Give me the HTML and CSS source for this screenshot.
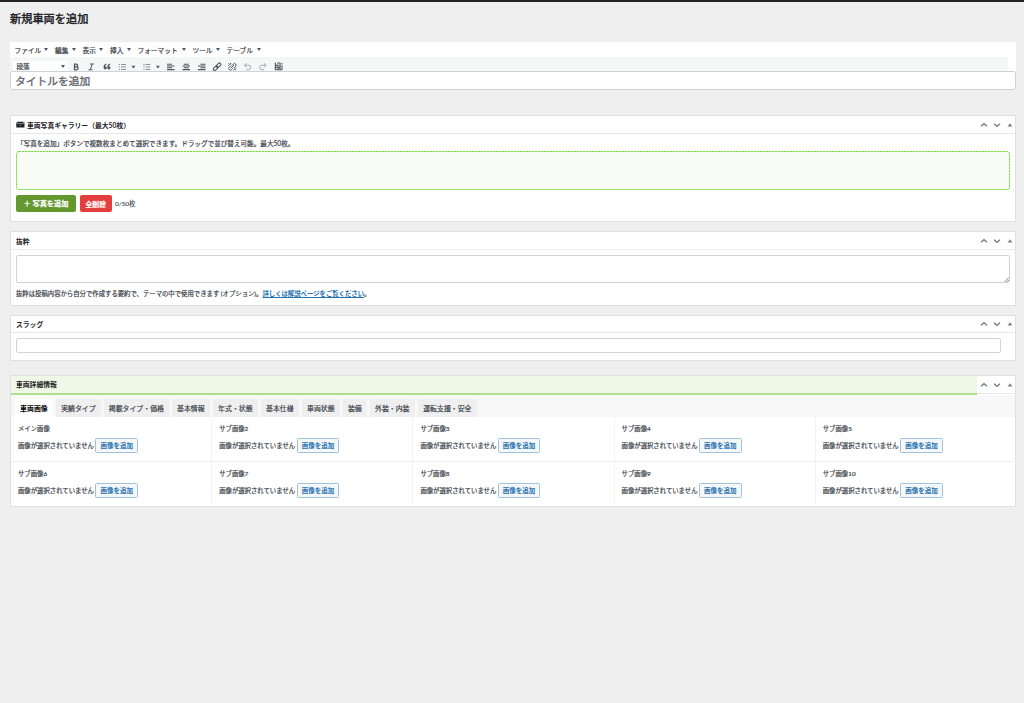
FILE: index.html
```html
<!DOCTYPE html>
<html lang="ja">
<head>
<meta charset="utf-8">
<title>新規車両を追加</title>
<link rel="stylesheet" href="styles.css">
</head>
<body>
<svg class="defs" width="0" height="0">
  <symbol id="up" viewBox="0 0 8 8"><path d="M1 5.3 4 2.7 7 5.3" fill="none" stroke="#787c82" stroke-width="1.3"/></symbol>
  <symbol id="down" viewBox="0 0 8 8"><path d="M1 2.7 4 5.3 7 2.7" fill="none" stroke="#787c82" stroke-width="1.3"/></symbol>
  <symbol id="tri" viewBox="0 0 8 8"><path d="M1.7 5.5 4 2.2 6.3 5.5z" fill="#787c82"/></symbol>
</svg>
<div class="adminbar"></div>
<main class="wrap">
  <h1 class="heading">新規車両を追加</h1>

  <section class="editor">
    <nav class="menubar">
      <span class="menu m1">ファイル</span><span class="menu m2">編集</span><span class="menu m3">表示</span><span class="menu m4">挿入</span><span class="menu m5">フォーマット</span><span class="menu m6">ツール</span><span class="menu m7">テーブル</span>
    </nav>
    <div class="toolbar">
      <div class="format">段落</div>
      <svg class="tools" width="225" height="14" viewBox="70 58 225 14" fill="none" stroke="#50575e" stroke-width="1.1">
        <path d="M74.5 64v6M74 64.1h2.2a1.3 1.3 0 0 1 0 2.7h-1.7M76 66.8h.6a1.5 1.5 0 0 1 0 3H74" stroke-width="1.3"/>
        <path d="M90 64h4M88.5 69.8h4M92.2 64l-1.9 5.8" stroke-width="1"/>
        <path d="M106.3 64.1q-2.3.9-2.1 3.2M110 64.1q-2.3.9-2.1 3.2" stroke-width="1.2"/>
        <g fill="#50575e" stroke="none"><circle cx="105.2" cy="67.8" r="1.6"/><circle cx="108.9" cy="67.8" r="1.6"/></g>
        <g stroke="#8c9196" stroke-width="1"><path d="M121 64.5h5M121 67h5M121 69.5h5M118.8 64.5h1.2M118.8 67h1.2M118.8 69.5h1.2"/><path d="M145.5 64.5h4.8M145.5 67h4.8M145.5 69.5h4.8M144 63.7v2M143.4 67h1M143.4 69.5h1"/></g>
        <path d="M131.4 65.7h4l-2 2.7zM155.9 65.7h4l-2 2.7z" fill="#50575e" stroke="none"/>
        <path d="M167 64.2h5M167 66h7.5M167 67.8h5M167 69.6h7.5"/>
        <path d="M183.8 64.2h5M182.5 66h7.5M183.8 67.8h5M182.5 69.6h7.5"/>
        <path d="M200.5 64.2h5M198 66h7.5M200.5 67.8h5M198 69.6h7.5"/>
        <g><rect x="-2.7" y="-1.4" width="5.4" height="2.8" rx="1.4" transform="translate(218.6 65.2) rotate(-45)"/><rect x="-2.7" y="-1.4" width="5.4" height="2.8" rx="1.4" transform="translate(215.6 68.2) rotate(-45)"/></g>
        <g stroke-width="1"><path d="M232 65.4l1.4-1.4a1.5 1.5 0 0 1 2.2 2.2l-1.7 1.7M232.9 68.2l-1.4 1.4a1.5 1.5 0 0 1-2.2-2.2l1.7-1.7M231 68l3-3M228.6 63.4l1.8 1.8M230.6 62.9v1.4M228.6 65.2v.8M236 70.2l-1.8-1.6M236.4 68h-1M234 70.4v-1"/></g>
        <g stroke="#a7aaad" stroke-width="1"><path d="M246.7 63.2 244.5 65.2l2.2 2M244.7 65.2h3.8a2.2 2.2 0 0 1 0 4.5h-2"/><path d="M263.8 63.2 266 65.2l-2.2 2M265.8 65.2H262a2.2 2.2 0 0 0 0 4.5h2"/></g>
        <path d="M274.8 63.2h1.2M277 63h3.4M274.8 65.4h3M274.8 67.4h2.4M274.8 69.8h7.4M282 63v1.5M280.8 65.6l-2.4 2.6M282 65.5v4M278 64.5v5M275.4 63.2v6.5M280 63v6.5"/>
      </svg>
    </div>
    <div class="title">タイトルを追加</div>
  </section>

  <section class="box gallery">
    <header class="head"><svg class="camera" width="9" height="7" viewBox="0 0 9 7"><path d="M.3 1.4h1V.7h6v.7h1.2v5H.3z" fill="#1d2327"/><path d="M1 2.5h7" stroke="#bbb" stroke-width=".6"/><circle cx="4.4" cy="4.3" r="1" fill="#555"/></svg><h2>車両写真ギャラリー（最大50枚）</h2><div class="handles"><svg><use href="#up"/></svg><svg><use href="#down"/></svg><svg><use href="#tri"/></svg></div></header>
    <p class="note">「写真を追加」ボタンで複数枚まとめて選択できます。ドラッグで並び替え可能。最大50枚。</p>
    <svg class="drop" width="994" height="39"><rect x=".5" y=".5" width="993" height="38" rx="2.5" fill="#f8fbf6" stroke="#c8efb0"/><rect x=".5" y=".5" width="993" height="38" rx="2.5" fill="none" stroke="#7cdb43" stroke-dasharray="2 1"/></svg>
    <div class="actions"><button class="add">＋ 写真を追加</button><button class="del">全削除</button><span class="count">0/50枚</span></div>
  </section>

  <section class="box excerpt">
    <header class="head"><h2>抜粋</h2><div class="handles"><svg><use href="#up"/></svg><svg><use href="#down"/></svg><svg><use href="#tri"/></svg></div></header>
    <div class="area"><svg width="5" height="5" viewBox="0 0 5 5"><path d="M.5 5 5 .5M2.8 5 5 2.8" stroke="#777" stroke-width=".9"/></svg></div>
    <p class="help">抜粋は投稿内容から自分で作成する要約で、テーマの中で使用できます (オプション)。<a>詳しくは解説ページをご覧ください</a>。</p>
  </section>

  <section class="box slug">
    <header class="head"><h2>スラッグ</h2><div class="handles"><svg><use href="#up"/></svg><svg><use href="#down"/></svg><svg><use href="#tri"/></svg></div></header>
    <div class="field"></div>
  </section>

  <section class="box detail">
    <header class="head"><h2>車両詳細情報</h2><div class="handles"><svg><use href="#up"/></svg><svg><use href="#down"/></svg><svg><use href="#tri"/></svg></div></header>
    <nav class="tabs"><span class="tab active w4">車両画像</span><span class="tab w5">実績タイプ</span><span class="tab w8">掲載タイプ・価格</span><span class="tab w4">基本情報</span><span class="tab w5">年式・状態</span><span class="tab w4">基本仕様</span><span class="tab w4">車両状態</span><span class="tab w2">装備</span><span class="tab w5">外装・内装</span><span class="tab w7">運転支援・安全</span></nav>
    <div class="grid">
      <div class="cell"><b>メイン画像</b><p>画像が選択されていません<button>画像を追加</button></p></div>
      <div class="cell"><b>サブ画像2</b><p>画像が選択されていません<button>画像を追加</button></p></div>
      <div class="cell"><b>サブ画像3</b><p>画像が選択されていません<button>画像を追加</button></p></div>
      <div class="cell"><b>サブ画像4</b><p>画像が選択されていません<button>画像を追加</button></p></div>
      <div class="cell"><b>サブ画像5</b><p>画像が選択されていません<button>画像を追加</button></p></div>
      <div class="cell"><b>サブ画像6</b><p>画像が選択されていません<button>画像を追加</button></p></div>
      <div class="cell"><b>サブ画像7</b><p>画像が選択されていません<button>画像を追加</button></p></div>
      <div class="cell"><b>サブ画像8</b><p>画像が選択されていません<button>画像を追加</button></p></div>
      <div class="cell"><b>サブ画像9</b><p>画像が選択されていません<button>画像を追加</button></p></div>
      <div class="cell"><b>サブ画像10</b><p>画像が選択されていません<button>画像を追加</button></p></div>
    </div>
  </section>
</main>
</body>
</html>
```
FILE: styles.css
```css
* { box-sizing: border-box; }
body { margin: 0; height: 703px; overflow: hidden; background: #efefef; color: #3c434a; font: 400 6.37px/10px Lato, "Noto Sans CJK JP", sans-serif; white-space: nowrap; -webkit-text-stroke: .2px currentColor; }
h1, h2, p { margin: 0; }
.defs { position: absolute; }
button { margin: 0; padding: 0; font: inherit; display: flex; align-items: center; justify-content: center; flex: none; }
.adminbar { height: 2px; background: #1d2327; }
.wrap { padding: 0 8px 0 10px; }
.heading { height: 40px; padding-top: 9px; font-size: 11.2px; line-height: 16px; font-weight: 400; color: #1d2327; -webkit-text-stroke-width: .45px; }

.editor { display: flex; flex-direction: column; background: #fff; }
.menubar { display: flex; height: 15px; padding-left: 4.5px; align-items: center; font-size: 6.7px; }
.menu { display: flex; align-items: center; justify-content: space-between; margin-right: 7px; }
.menu::after, .format::after { content: ""; border: 2px solid transparent; border-top: 3px solid #50575e; border-bottom: 0; }
.m1 { width: 33.5px; }
.m2, .m3, .m4 { width: 20.5px; }
.m5 { width: 48px; }
.m6 { width: 27px; }
.m7 { width: 34px; }
.toolbar { display: flex; align-items: flex-start; height: 14px; width: 998px; background: #f5f6f6; }
.format { display: flex; align-items: center; justify-content: space-between; width: 55px; height: 11px; margin: 4px 3px 0 2.5px; padding: 0 3px 0 4px; background: #fff; font-size: 6.5px; }
.tools { margin-top: 1px; margin-left: -.5px; }
.title { height: 19px; padding-left: 4px; border: 1px solid #d0d2d4; border-radius: 2px; background: #fff; color: #646970; font-size: 10.75px; line-height: 18px; -webkit-text-stroke-width: .35px; }

.box { border: 1px solid #e0e0e1; background: #fff; }
.head { display: flex; height: 18px; align-items: center; padding-left: 5px; border-bottom: 1px solid #e8e8e9; }
.head h2 { flex: 1; font-size: 6.8px; font-weight: 700; color: #1d2327; line-height: 10px; -webkit-text-stroke-width: 0; }
.handles { display: flex; width: 38px; padding-left: 3px; gap: 4.8px; }
.handles svg { display: block; width: 8px; height: 8px; }
.camera { margin-right: 2px; }
.gallery { height: 107px; margin-top: 25px; }
.note { padding: 4px 6px 0; height: 17px; line-height: 11px; font-size: 6.6px; }
.drop { display: block; margin: 0 5px; }
.actions { display: flex; margin: 5px 5px 0; height: 17px; align-items: center; font-size: 6.4px; }
.actions button { height: 17px; border: 0; border-radius: 2px; color: #fff; font-weight: 700; }
.add { width: 60px; background: #64982f; margin-right: 4px; font-size: 7.2px; }
.del { width: 31.5px; background: #e53e3e; margin-right: 3.5px; font-size: 6.8px; }
.count { -webkit-text-stroke-width: .1px; }
.excerpt { height: 75px; margin-top: 9px; }
.area { display: flex; justify-content: flex-end; align-items: flex-end; height: 28px; margin: 5px 5px 0; border: 1px solid #d2d3d5; border-radius: 2px; }
.help { padding: 6px 5px; font-size: 6.37px; }
.help a { color: #2271b1; text-decoration: underline; font-weight: 700; -webkit-text-stroke-width: 0; }
.slug { height: 46px; margin-top: 9px; }
.slug .head { height: 17px; }
.field { width: 984.5px; height: 15px; margin: 5px 5px 0; border: 1px solid #d2d3d5; border-radius: 2px; }

.detail { height: 132px; margin-top: 14px; }
.detail .head { height: 19px; padding: 0; border: 0; align-items: flex-start; }
.detail h2 { height: 19px; padding-left: 5px; line-height: 17px; background: #eff7e6; border-bottom: 2px solid #b1de8d; }
.detail .handles { height: 18px; align-items: center; border-bottom: 1px solid #e8e8e9; }
.tabs { display: flex; gap: 3.2px; height: 22px; padding: 4px 4px 0; background: #f8f8f8; font-size: 6.9px; }
.tab { height: 18px; line-height: 18px; text-align: center; background: #efefef; }
.tab.active { background: #fff; color: #000; font-weight: 700; -webkit-text-stroke-width: 0; }
.w2 { width: 23.8px; }
.w4 { width: 37.8px; }
.w5 { width: 44.8px; }
.w7 { width: 59px; }
.w8 { width: 64.8px; }
.grid { display: grid; grid-template-columns: repeat(5, 201.2px); grid-auto-rows: 45px; margin-right: -2px; }
.cell { padding: 7px 7px 0; border-right: 1px solid #f3f3f4; border-bottom: 1px solid #f0f0f1; }
.cell:nth-child(5n) { border-right: 0; }
.cell:nth-child(n+6) { border-bottom: 0; }
.cell b { display: block; font-weight: 400; }
.cell p { display: flex; align-items: center; gap: 1.5px; height: 15px; margin-top: 4px; }
.cell button { width: 42.5px; height: 15px; border: 1px solid #9fc3de; border-radius: 1.5px; background: #f6f7f7; color: #2271b1; font-size: 6.5px; font-weight: 700; -webkit-text-stroke-width: 0; }
```
